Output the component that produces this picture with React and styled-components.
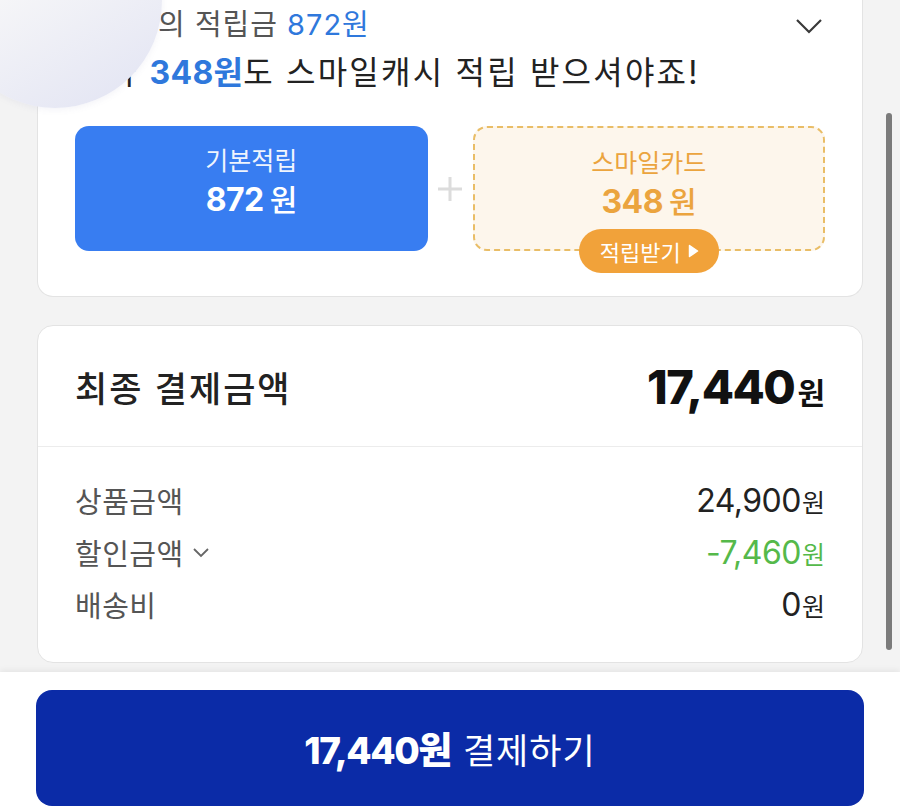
import React from 'react'
import styled, { createGlobalStyle } from 'styled-components'

const GlobalStyle = createGlobalStyle`
  html, body {
    margin: 0;
    padding: 0;
    background: #f3f3f3;
    height: 811px;
    overflow: hidden;
  }
  body {
    font-family: Inter, "Noto Sans CJK KR", sans-serif;
    color: #222;
  }
`

const Screen = styled.div`
  position: relative;
  height: 811px;
  display: flex;
  flex-direction: column;
  overflow: hidden;
`

const Main = styled.div`
  flex: 1;
  display: flex;
  flex-direction: column;
  gap: 28px;
  padding: 0 37px 9px;
`

const Card = styled.div`
  background: #fff;
  border: 1.5px solid #e3e3e3;
  border-radius: 16px;
  ${p => p.$cut && 'border-top: none; border-radius: 0 0 16px 16px;'}
`

const RewardCard = styled(Card)`
  padding: 7px 37px 45px;
`

const Head = styled.div`
  display: flex;
  justify-content: space-between;
  align-items: flex-start;
`

const Lines = styled.div`
  display: flex;
  flex-direction: column;
  gap: 10px;
`

const SubLine = styled.div`
  font-size: 29px;
  line-height: 36px;
  color: #555;
  letter-spacing: 1px;
`

const Headline = styled.div`
  font-size: 32px;
  line-height: 40px;
  color: #222;
  letter-spacing: 2.2px;
`

const Blue = styled.span`
  color: #2f78dc;
  font-weight: ${p => (p.$bold ? 700 : 400)};
  letter-spacing: ${p => (p.$bold ? '0.3px' : 'inherit')};
`

const Chevron = styled.svg`
  margin-top: 10px;
  margin-right: 2px;
  flex-shrink: 0;
`

const Boxes = styled.div`
  margin-top: 33px;
  display: grid;
  grid-template-columns: 1fr 45px 1fr;
  align-items: stretch;
`

const Box = styled.div`
  position: relative;
  height: 125px;
  border-radius: 14px;
  box-sizing: border-box;
  display: flex;
  flex-direction: column;
  align-items: center;
  padding-top: 19px;
  background: ${p => (p.$dashed ? '#fdf6ec' : '#387df1')};
  border: ${p => (p.$dashed ? '2px dashed #e9bd66' : 'none')};
  color: ${p => (p.$dashed ? '#eba43e' : '#fff')};
`

const BoxLabel = styled.div`
  font-size: 25px;
  line-height: 32px;
  opacity: ${p => (p.$soft ? 0.92 : 1)};
`

const BoxAmount = styled.div`
  margin-top: 4px;
  font-size: 32px;
  line-height: 38px;
  font-weight: 700;
  letter-spacing: -0.5px;
  span {
    font-size: 30px;
    font-weight: 500;
    margin-left: 6px;
  }
`

const Plus = styled.div`
  display: flex;
  align-items: center;
  justify-content: center;
`

const Pill = styled.div`
  position: absolute;
  left: 50%;
  bottom: -24px;
  transform: translateX(-50%);
  height: 44px;
  padding: 0 20px 0 21px;
  border-radius: 22px;
  background: #f1a23a;
  color: #fff;
  font-size: 22px;
  display: flex;
  align-items: center;
  gap: 7px;
  white-space: nowrap;
`

const TotalHead = styled.div`
  height: 120px;
  padding: 0 37px;
  display: flex;
  align-items: center;
  justify-content: space-between;
  border-bottom: 1.5px solid #ececec;
`

const TotalLabel = styled.div`
  font-size: 35px;
  font-weight: 500;
  letter-spacing: 2px;
  color: #222;
`

const TotalValue = styled.div`
  font-size: 47px;
  font-weight: 800;
  letter-spacing: -1.5px;
  color: #111;
  span {
    font-size: 30px;
    font-weight: 700;
    letter-spacing: 0;
    margin-left: 3px;
  }
`

const Rows = styled.div`
  padding: 27px 37px 32px;
`

const Row = styled.div`
  height: 52px;
  display: flex;
  align-items: center;
  justify-content: space-between;
`

const RowLabel = styled.div`
  font-size: 29px;
  letter-spacing: 0.5px;
  color: #555;
  display: flex;
  align-items: center;
  gap: 8px;
`

const RowValue = styled.div`
  font-size: 32px;
  color: ${p => p.$color || '#222'};
  letter-spacing: -0.5px;
  span {
    font-size: 25px;
    letter-spacing: 0;
    margin-left: 1px;
  }
`

const BottomBar = styled.div`
  background: #fff;
  padding: 18px 36px 30px;
  box-shadow: 0 -2px 6px rgba(0, 0, 0, 0.06);
`

const PayButton = styled.button`
  width: 100%;
  height: 116px;
  border: none;
  border-radius: 16px;
  background: #0b2ba7;
  color: #fff;
  font-family: Inter, "Noto Sans CJK KR", sans-serif;
  font-size: 35px;
  letter-spacing: 1px;
  display: flex;
  align-items: center;
  justify-content: center;
  gap: 12px;
  b {
    font-size: 37px;
    font-weight: 800;
    letter-spacing: -1.5px;
  }
`

const Bubble = styled.div`
  position: absolute;
  left: -52px;
  top: -106px;
  width: 214px;
  height: 214px;
  border-radius: 50%;
  background: linear-gradient(150deg, #f7f7f8 35%, #e1e3f3 100%);
  box-shadow: 0 2px 6px rgba(120, 120, 160, 0.08);
`

const ScrollThumb = styled.div`
  position: absolute;
  right: 8px;
  top: 113px;
  width: 6px;
  height: 537px;
  border-radius: 3px;
  background: #7b7b7b;
`

const Won = ({ value }) => (
  <>
    {value}
    <span>원</span>
  </>
)

const rows = [
  { label: '상품금액', value: '24,900' },
  { label: '할인금액', value: '-7,460', color: '#55b94a', toggle: true },
  { label: '배송비', value: '0' },
]

export default function App() {
  return (
    <Screen>
      <GlobalStyle />
      <Main>
        <RewardCard $cut>
          <Head>
            <Lines>
              <SubLine>
                고객님의 적립금 <Blue>872원</Blue>
              </SubLine>
              <Headline>
                추가 <Blue $bold>348원</Blue>도 스마일캐시 적립 받으셔야죠!
              </Headline>
            </Lines>
            <Chevron width="28" height="18" viewBox="0 0 28 18">
              <polyline points="2,3 14,15 26,3" fill="none" stroke="#3a3a3a" strokeWidth="2.2" />
            </Chevron>
          </Head>
          <Boxes>
            <Box>
              <BoxLabel $soft>기본적립</BoxLabel>
              <BoxAmount>
                <Won value="872" />
              </BoxAmount>
            </Box>
            <Plus>
              <svg width="26" height="26" viewBox="0 0 26 26">
                <path d="M13 1v24M1 13h24" stroke="#dcdcdc" strokeWidth="3" />
              </svg>
            </Plus>
            <Box $dashed>
              <BoxLabel>스마일카드</BoxLabel>
              <BoxAmount>
                <Won value="348" />
              </BoxAmount>
              <Pill>
                적립받기
                <svg width="11" height="14" viewBox="0 0 11 14">
                  <path d="M1.5 1.5 L9.5 7 L1.5 12.5 Z" fill="#fff" stroke="#fff" strokeWidth="1.5" strokeLinejoin="round" />
                </svg>
              </Pill>
            </Box>
          </Boxes>
        </RewardCard>

        <Card>
          <TotalHead>
            <TotalLabel>최종 결제금액</TotalLabel>
            <TotalValue>
              <Won value="17,440" />
            </TotalValue>
          </TotalHead>
          <Rows>
            {rows.map(r => (
              <Row key={r.label}>
                <RowLabel>
                  {r.label}
                  {r.toggle && (
                    <svg width="18" height="11" viewBox="0 0 18 11">
                      <polyline points="2,2 9,9 16,2" fill="none" stroke="#666" strokeWidth="1.8" />
                    </svg>
                  )}
                </RowLabel>
                <RowValue $color={r.color}>
                  <Won value={r.value} />
                </RowValue>
              </Row>
            ))}
          </Rows>
        </Card>
      </Main>

      <BottomBar>
        <PayButton>
          <b>17,440원</b>
          결제하기
        </PayButton>
      </BottomBar>

      <Bubble />
      <ScrollThumb />
    </Screen>
  )
}
